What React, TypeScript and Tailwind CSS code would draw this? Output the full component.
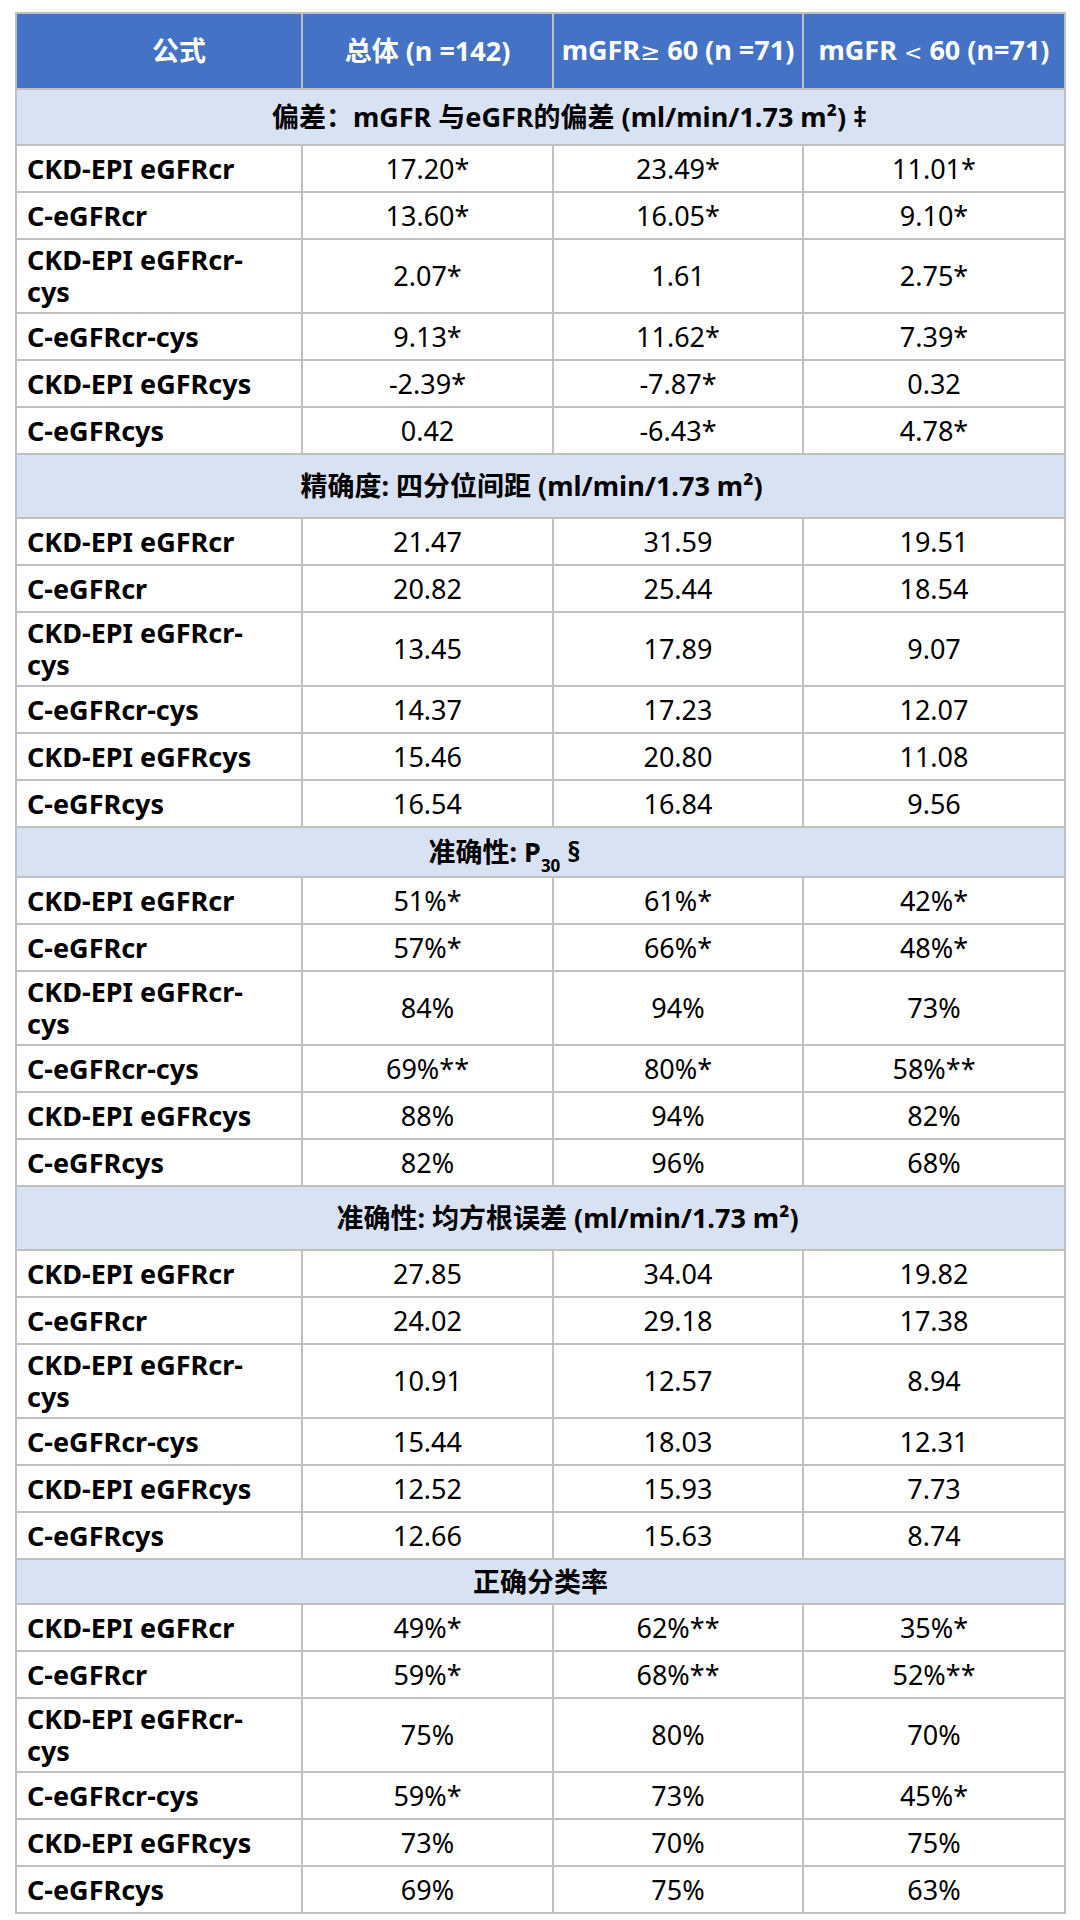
type Row = { name: string; wrap?: boolean; values: [string, string, string] };
type Section = { title: React.ReactNode; height: string; shift: string; rows: Row[] };

const names = [
  "CKD-EPI eGFRcr",
  "C-eGFRcr",
  "CKD-EPI eGFRcr-cys",
  "C-eGFRcr-cys",
  "CKD-EPI eGFRcys",
  "C-eGFRcys",
];

const make = (vals: [string, string, string][]): Row[] =>
  vals.map((v, i) => ({ name: names[i], wrap: i === 2, values: v }));

const sections: Section[] = [
  {
    title: <>偏差：mGFR 与eGFR的偏差 (ml/min/1.73 m²) ‡</>,
    height: "h-[56px]",
    shift: "pl-[58px]",
    rows: make([
      ["17.20*", "23.49*", "11.01*"],
      ["13.60*", "16.05*", "9.10*"],
      ["2.07*", "1.61", "2.75*"],
      ["9.13*", "11.62*", "7.39*"],
      ["-2.39*", "-7.87*", "0.32"],
      ["0.42", "-6.43*", "4.78*"],
    ]),
  },
  {
    title: <>精确度: 四分位间距 (ml/min/1.73 m²)</>,
    height: "h-[64px]",
    shift: "pr-[18px]",
    rows: make([
      ["21.47", "31.59", "19.51"],
      ["20.82", "25.44", "18.54"],
      ["13.45", "17.89", "9.07"],
      ["14.37", "17.23", "12.07"],
      ["15.46", "20.80", "11.08"],
      ["16.54", "16.84", "9.56"],
    ]),
  },
  {
    title: (
      <>
        准确性: P<sub className="text-[17px] align-[-6px]">30</sub> §
      </>
    ),
    height: "h-[50px]",
    shift: "pr-[72px]",
    rows: make([
      ["51%*", "61%*", "42%*"],
      ["57%*", "66%*", "48%*"],
      ["84%", "94%", "73%"],
      ["69%**", "80%*", "58%**"],
      ["88%", "94%", "82%"],
      ["82%", "96%", "68%"],
    ]),
  },
  {
    title: <>准确性: 均方根误差 (ml/min/1.73 m²)</>,
    height: "h-[64px]",
    shift: "pl-[54px]",
    rows: make([
      ["27.85", "34.04", "19.82"],
      ["24.02", "29.18", "17.38"],
      ["10.91", "12.57", "8.94"],
      ["15.44", "18.03", "12.31"],
      ["12.52", "15.93", "7.73"],
      ["12.66", "15.63", "8.74"],
    ]),
  },
  {
    title: <>正确分类率</>,
    height: "h-[45px]",
    shift: "",
    rows: make([
      ["49%*", "62%**", "35%*"],
      ["59%*", "68%**", "52%**"],
      ["75%", "80%", "70%"],
      ["59%*", "73%", "45%*"],
      ["73%", "70%", "75%"],
      ["69%", "75%", "63%"],
    ]),
  },
];

const cell = "border-2 border-[#c0c0c0] p-0 align-middle";
const head = `${cell} bg-[#4472c4] text-white font-bold text-center`;
const math = "font-['DejaVu_Sans',sans-serif] font-normal";

export default function App() {
  return (
    <div className="min-h-[1920px] w-[1080px] bg-white pt-[12px] pl-[15px] font-['Noto_Sans','Noto_Sans_CJK_SC',sans-serif] text-[27px] leading-[28px] text-black">
      <table className="w-[1049px] table-fixed border-collapse">
        <colgroup>
          <col className="w-[286px]" />
          <col className="w-[251px]" />
          <col className="w-[250px]" />
          <col className="w-[262px]" />
        </colgroup>
        <thead>
          <tr className="h-[76px]">
            <th className={`${head} pl-[40px]`}>公式</th>
            <th className={head}>总体 (n =142)</th>
            <th className={`${head} whitespace-nowrap`}>
              mGFR<span className={`${math} text-[24px]`}>≥</span> 60 (n =71)
            </th>
            <th className={`${head} whitespace-nowrap`}>
              mGFR <span className={`${math} text-[22px]`}>&lt;</span> 60 (n=71)
            </th>
          </tr>
        </thead>
        <tbody>
          {sections.map((s, si) => (
            <Block key={si} section={s} />
          ))}
        </tbody>
      </table>
    </div>
  );
}

function Block({ section }: { section: Section }) {
  return (
    <>
      <tr className={section.height}>
        <td colSpan={4} className={`${cell} bg-[#d9e2f3] text-center font-bold whitespace-nowrap ${section.shift}`}>
          {section.title}
        </td>
      </tr>
      {section.rows.map((r) => (
        <tr key={r.name} className={r.wrap ? "h-[74px]" : "h-[47px]"}>
          <td className={`${cell} pl-[10px] font-bold whitespace-nowrap ${r.wrap ? "leading-[32px]" : ""}`}>
            {r.wrap ? (
              <>
                CKD-EPI eGFRcr-
                <br />
                cys
              </>
            ) : (
              r.name
            )}
          </td>
          {r.values.map((v, i) => (
            <td key={i} className={`${cell} text-center`}>
              {v}
            </td>
          ))}
        </tr>
      ))}
    </>
  );
}
